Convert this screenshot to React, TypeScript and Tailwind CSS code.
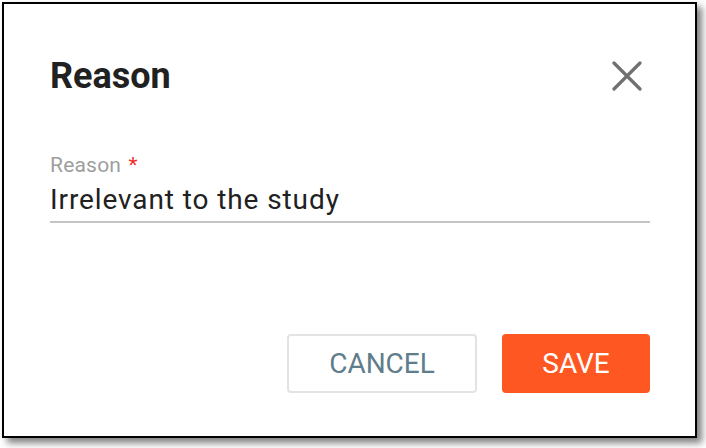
import React from "react";

export default function App() {
  return (
    <div className="w-[706px] h-[448px] bg-white pl-[2px] pt-[2px]" style={{ fontFamily: "Roboto, 'Liberation Sans', sans-serif" }}>
      <div className="w-[695px] h-[436px] border-2 border-black bg-white shadow-[5px_5px_7px_rgba(0,0,0,0.5)] flex flex-col pl-[46px] pr-[45px] pt-[52px]">
        <div className="flex items-center justify-between h-[40px]">
          <h2 className="text-[36px] leading-[40px] font-bold text-[#212121]">Reason</h2>
          <svg width="30" height="30" viewBox="0 0 30 30" className="mr-[8px] -mt-[1px]">
            <path d="M2 2 L28 28 M28 2 L2 28" stroke="#707070" strokeWidth="3.2" strokeLinecap="round" />
          </svg>
        </div>
        <div className="mt-[57px] text-[21px] leading-[24px] tracking-[0.2px] text-[#9e9e9e]">
          Reason <span className="ml-[2px] text-[#f0302a]">*</span>
        </div>
        <div className="mt-[7px] text-[28px] leading-[32px] tracking-[0.9px] text-[#212121]">
          Irrelevant to the study
        </div>
        <div className="mt-[5px] h-[2px] bg-[#c4c4c4]" />
        <div className="mt-[111px] flex justify-end gap-[25px]">
          <button className="w-[190px] h-[59px] rounded-[4px] border-2 border-[#e3e3e3] bg-white text-[28px] leading-none text-[#607d8b]">
            CANCEL
          </button>
          <button className="w-[148px] h-[59px] rounded-[4px] bg-[#ff5722] text-[28px] leading-none text-white">
            SAVE
          </button>
        </div>
      </div>
    </div>
  );
}
